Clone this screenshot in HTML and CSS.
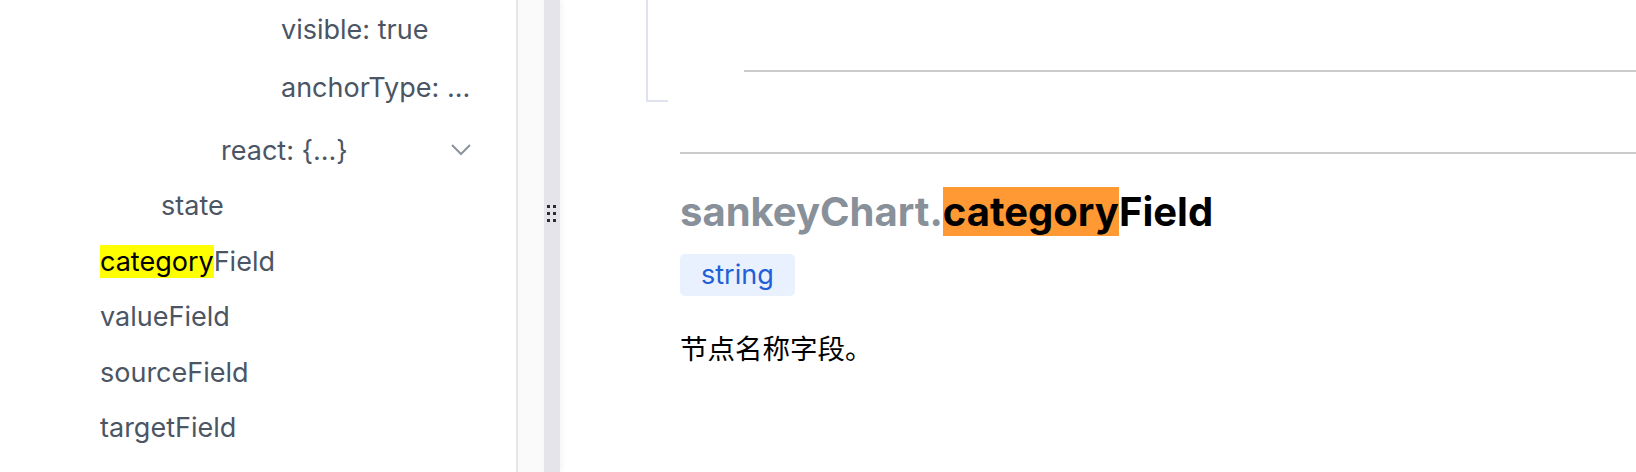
FILE: index.html
```html
<!DOCTYPE html>
<html lang="zh-CN">
<head>
<meta charset="utf-8">
<title>sankeyChart.categoryField</title>
<link rel="stylesheet" href="styles.css">
</head>
<body>
<div class="layout">
  <aside class="sidebar">
    <ul class="tree">
      <li class="row l3">visible: true</li>
      <li class="row l3 gap-s">anchorType: ...</li>
      <li class="row l2 gap-m">
        <span>react: {...}</span>
        <svg class="chevron" width="20" height="12" viewBox="0 0 20 12" aria-hidden="true"><path d="M1 1 L10 10 L19 1" fill="none" stroke="#8d939b" stroke-width="2"/></svg>
      </li>
      <li class="row l1">state</li>
      <li class="row l0"><mark class="hit">category</mark>Field</li>
      <li class="row l0">valueField</li>
      <li class="row l0">sourceField</li>
      <li class="row l0">targetField</li>
    </ul>
  </aside>
  <div class="gutter"></div>
  <div class="resizer">
    <div class="grip">
      <span></span><span></span><span></span><span></span><span></span><span></span>
    </div>
  </div>
  <main class="main">
    <div class="prev-block">
      <div class="prev-rail"></div>
      <div class="prev-body"><hr class="rule rule-inner"></div>
    </div>
    <section class="prop">
      <hr class="rule">
      <h2 class="prop-title"><span class="prefix">sankeyChart.</span><mark class="hit-strong">category</mark>Field</h2>
      <span class="type-badge">string</span>
      <p class="prop-desc">节点名称字段。</p>
    </section>
  </main>
</div>
</body>
</html>
```
FILE: styles.css
```css
* { box-sizing: border-box; }
html, body { margin: 0; padding: 0; }
body {
  width: 1636px;
  height: 472px;
  overflow: hidden;
  background: #fff;
  font-family: Inter, "Noto Sans", "Noto Sans CJK SC", sans-serif;
}
.layout {
  display: flex;
  height: 472px;
}
.sidebar {
  width: 518px;
  flex: none;
  border-right: 2px solid #e6e6e6;
  background: #fff;
  overflow: hidden;
}
.tree {
  list-style: none;
  margin: 0;
  padding: 1.5px 0 0 0;
}
.row {
  height: 55.5px;
  display: flex;
  align-items: center;
  font-size: 27px;
  color: #4b5563;
  white-space: nowrap;
}
.row.l0 { padding-left: 100px; }
.row.l1 { padding-left: 161px; }
.row.l2 { padding-left: 221px; justify-content: space-between; padding-right: 45px; }
.row.l3 { padding-left: 281px; }
.gap-s { margin-top: 3px; }
.gap-m { margin-top: 7px; }
.chevron { display: block; }
.hit {
  background: #ffff00;
  color: #000;
}
.gutter {
  width: 26px;
  flex: none;
  background: #fafafa;
}
.resizer {
  width: 16px;
  flex: none;
  background: #e4e4ea;
  box-shadow: 2px 0 6px rgba(0, 0, 0, 0.05);
  position: relative;
  z-index: 1;
  padding-top: 205px;
}
.grip {
  display: grid;
  grid-template-columns: 3px 3px;
  column-gap: 3px;
  row-gap: 4px;
  margin-left: 3px;
}
.grip span {
  width: 3px;
  height: 3px;
  background: #2b2b30;
}
.main {
  flex: 1;
  min-width: 0;
  background: #fff;
}
.prev-block {
  display: flex;
  margin-left: 86px;
  height: 102px;
}
.prev-rail {
  width: 22px;
  height: 102px;
  border-left: 2px solid #dfe3ee;
  border-bottom: 2px solid #dfe3ee;
}
.prev-body {
  flex: 1;
  padding-top: 70px;
  padding-left: 76px;
}
.rule {
  border: 0;
  height: 2px;
  background: #cccccc;
  margin: 0;
}
.prop {
  padding-left: 120px;
  padding-top: 50px;
}
.prop-title {
  margin: 33px 0 0 0;
  font-size: 40px;
  line-height: 50px;
  font-weight: 700;
  color: #000;
  white-space: nowrap;
}
.prefix { color: #88909a; }
.hit-strong {
  background: #ff9933;
  color: #000;
}
.type-badge {
  display: inline-block;
  margin-top: 17px;
  padding: 4px 21px;
  font-size: 27px;
  line-height: 34px;
  color: #1f5fd8;
  background: #e8f1fd;
  border-radius: 5px;
}
.prop-desc {
  margin: 31px 0 0 0;
  font-family: "Noto Sans CJK SC", sans-serif;
  font-size: 27.5px;
  line-height: 40px;
  color: #000;
}
```
